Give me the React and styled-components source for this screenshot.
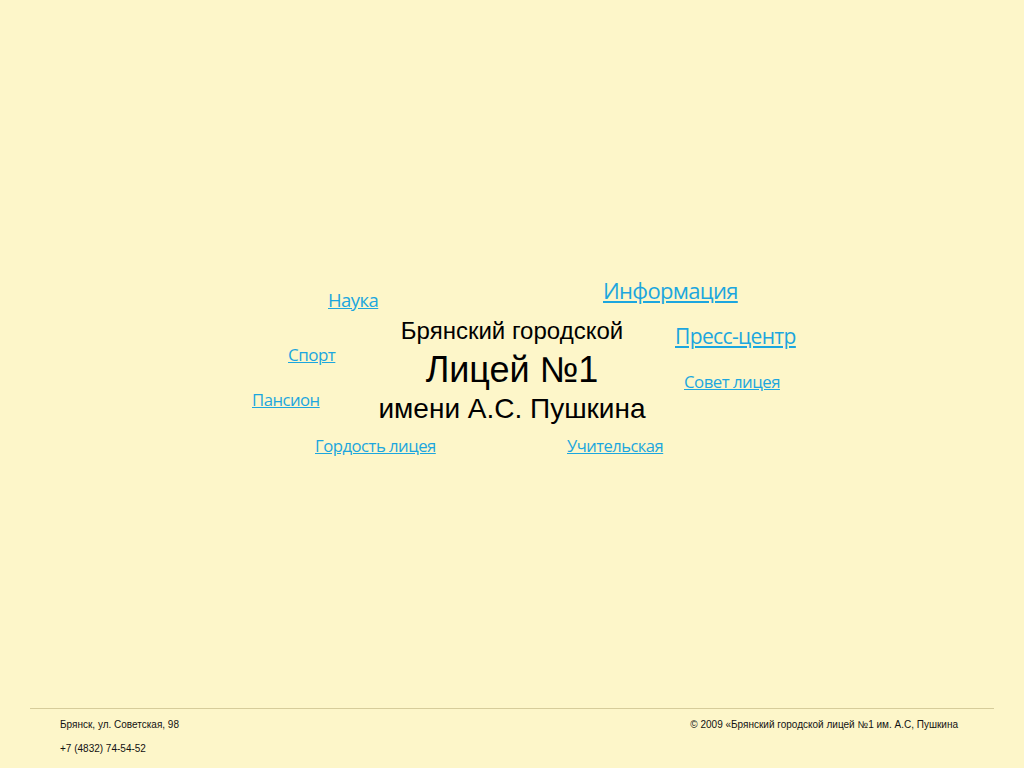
import React from "react";
import styled, { createGlobalStyle } from "styled-components";

const GlobalStyle = createGlobalStyle`
  html, body {
    margin: 0;
    padding: 0;
    background: #fdf6c9;
  }
`;

const links = [
  { label: "Информация", x: 371, y: 2, size: 22 },
  { label: "Наука", x: 96, y: 14, size: 18.5 },
  { label: "Пресс-центр", x: 443, y: 49, size: 21 },
  { label: "Спорт", x: 56, y: 70, size: 17 },
  { label: "Совет лицея", x: 452, y: 97, size: 16.8 },
  { label: "Пансион", x: 20, y: 115, size: 16.7 },
  { label: "Гордость лицея", x: 83, y: 161, size: 16.7 },
  { label: "Учительская", x: 335, y: 161, size: 16.5 },
];

const Page = styled.div`
  min-height: 100vh;
  display: flex;
  flex-direction: column;
`;

const Main = styled.main`
  flex: 1;
  display: flex;
  justify-content: center;
  padding-top: 275px;
`;

const Cloud = styled.div`
  position: relative;
  width: 560px;
  height: 190px;
`;

const Title = styled.div`
  display: flex;
  flex-direction: column;
  align-items: center;
  padding-top: 41px;
  font-family: "Liberation Sans", Arial, sans-serif;
  color: #000;
`;

const TitleLine = styled.div`
  font-size: ${(p) => p.size}px;
  line-height: ${(p) => p.lh}px;
  white-space: nowrap;
`;

const CloudLink = styled.a`
  position: absolute;
  font-family: "Open Sans", sans-serif;
  font-size: ${(p) => p.size}px;
  line-height: 1.2;
  color: #1ca6de;
  text-decoration: underline;
  white-space: nowrap;
  letter-spacing: -0.03em;
`;

const Footer = styled.footer`
  margin: 0 30px;
  border-top: 1px solid #d6cc9a;
  height: 59px;
  padding-left: 30px;
  padding-right: 36px;
  display: flex;
  justify-content: space-between;
  font-family: "Liberation Sans", Arial, sans-serif;
  font-size: 10px;
  color: #111;
`;

const Contacts = styled.div`
  padding-top: 9px;
  display: flex;
  flex-direction: column;
  gap: 11px;
  line-height: 13px;
`;

const Copy = styled.div`
  padding-top: 9px;
  line-height: 13px;
`;

export default function App() {
  return (
    <Page>
      <GlobalStyle />
      <Main>
        <Cloud>
          <Title>
            <TitleLine size={24} lh={30}>Брянский городской</TitleLine>
            <TitleLine size={36} lh={48}>Лицей №1</TitleLine>
            <TitleLine size={28} lh={30}>имени А.С. Пушкина</TitleLine>
          </Title>
          {links.map((l) => (
            <CloudLink
              key={l.label}
              href="#"
              size={l.size}
              style={{ left: l.x, top: l.y }}
            >
              {l.label}
            </CloudLink>
          ))}
        </Cloud>
      </Main>
      <Footer>
        <Contacts>
          <span>Брянск, ул. Советская, 98</span>
          <span>+7 (4832) 74-54-52</span>
        </Contacts>
        <Copy>© 2009 «Брянский городской лицей №1 им. А.С, Пушкина</Copy>
      </Footer>
    </Page>
  );
}
